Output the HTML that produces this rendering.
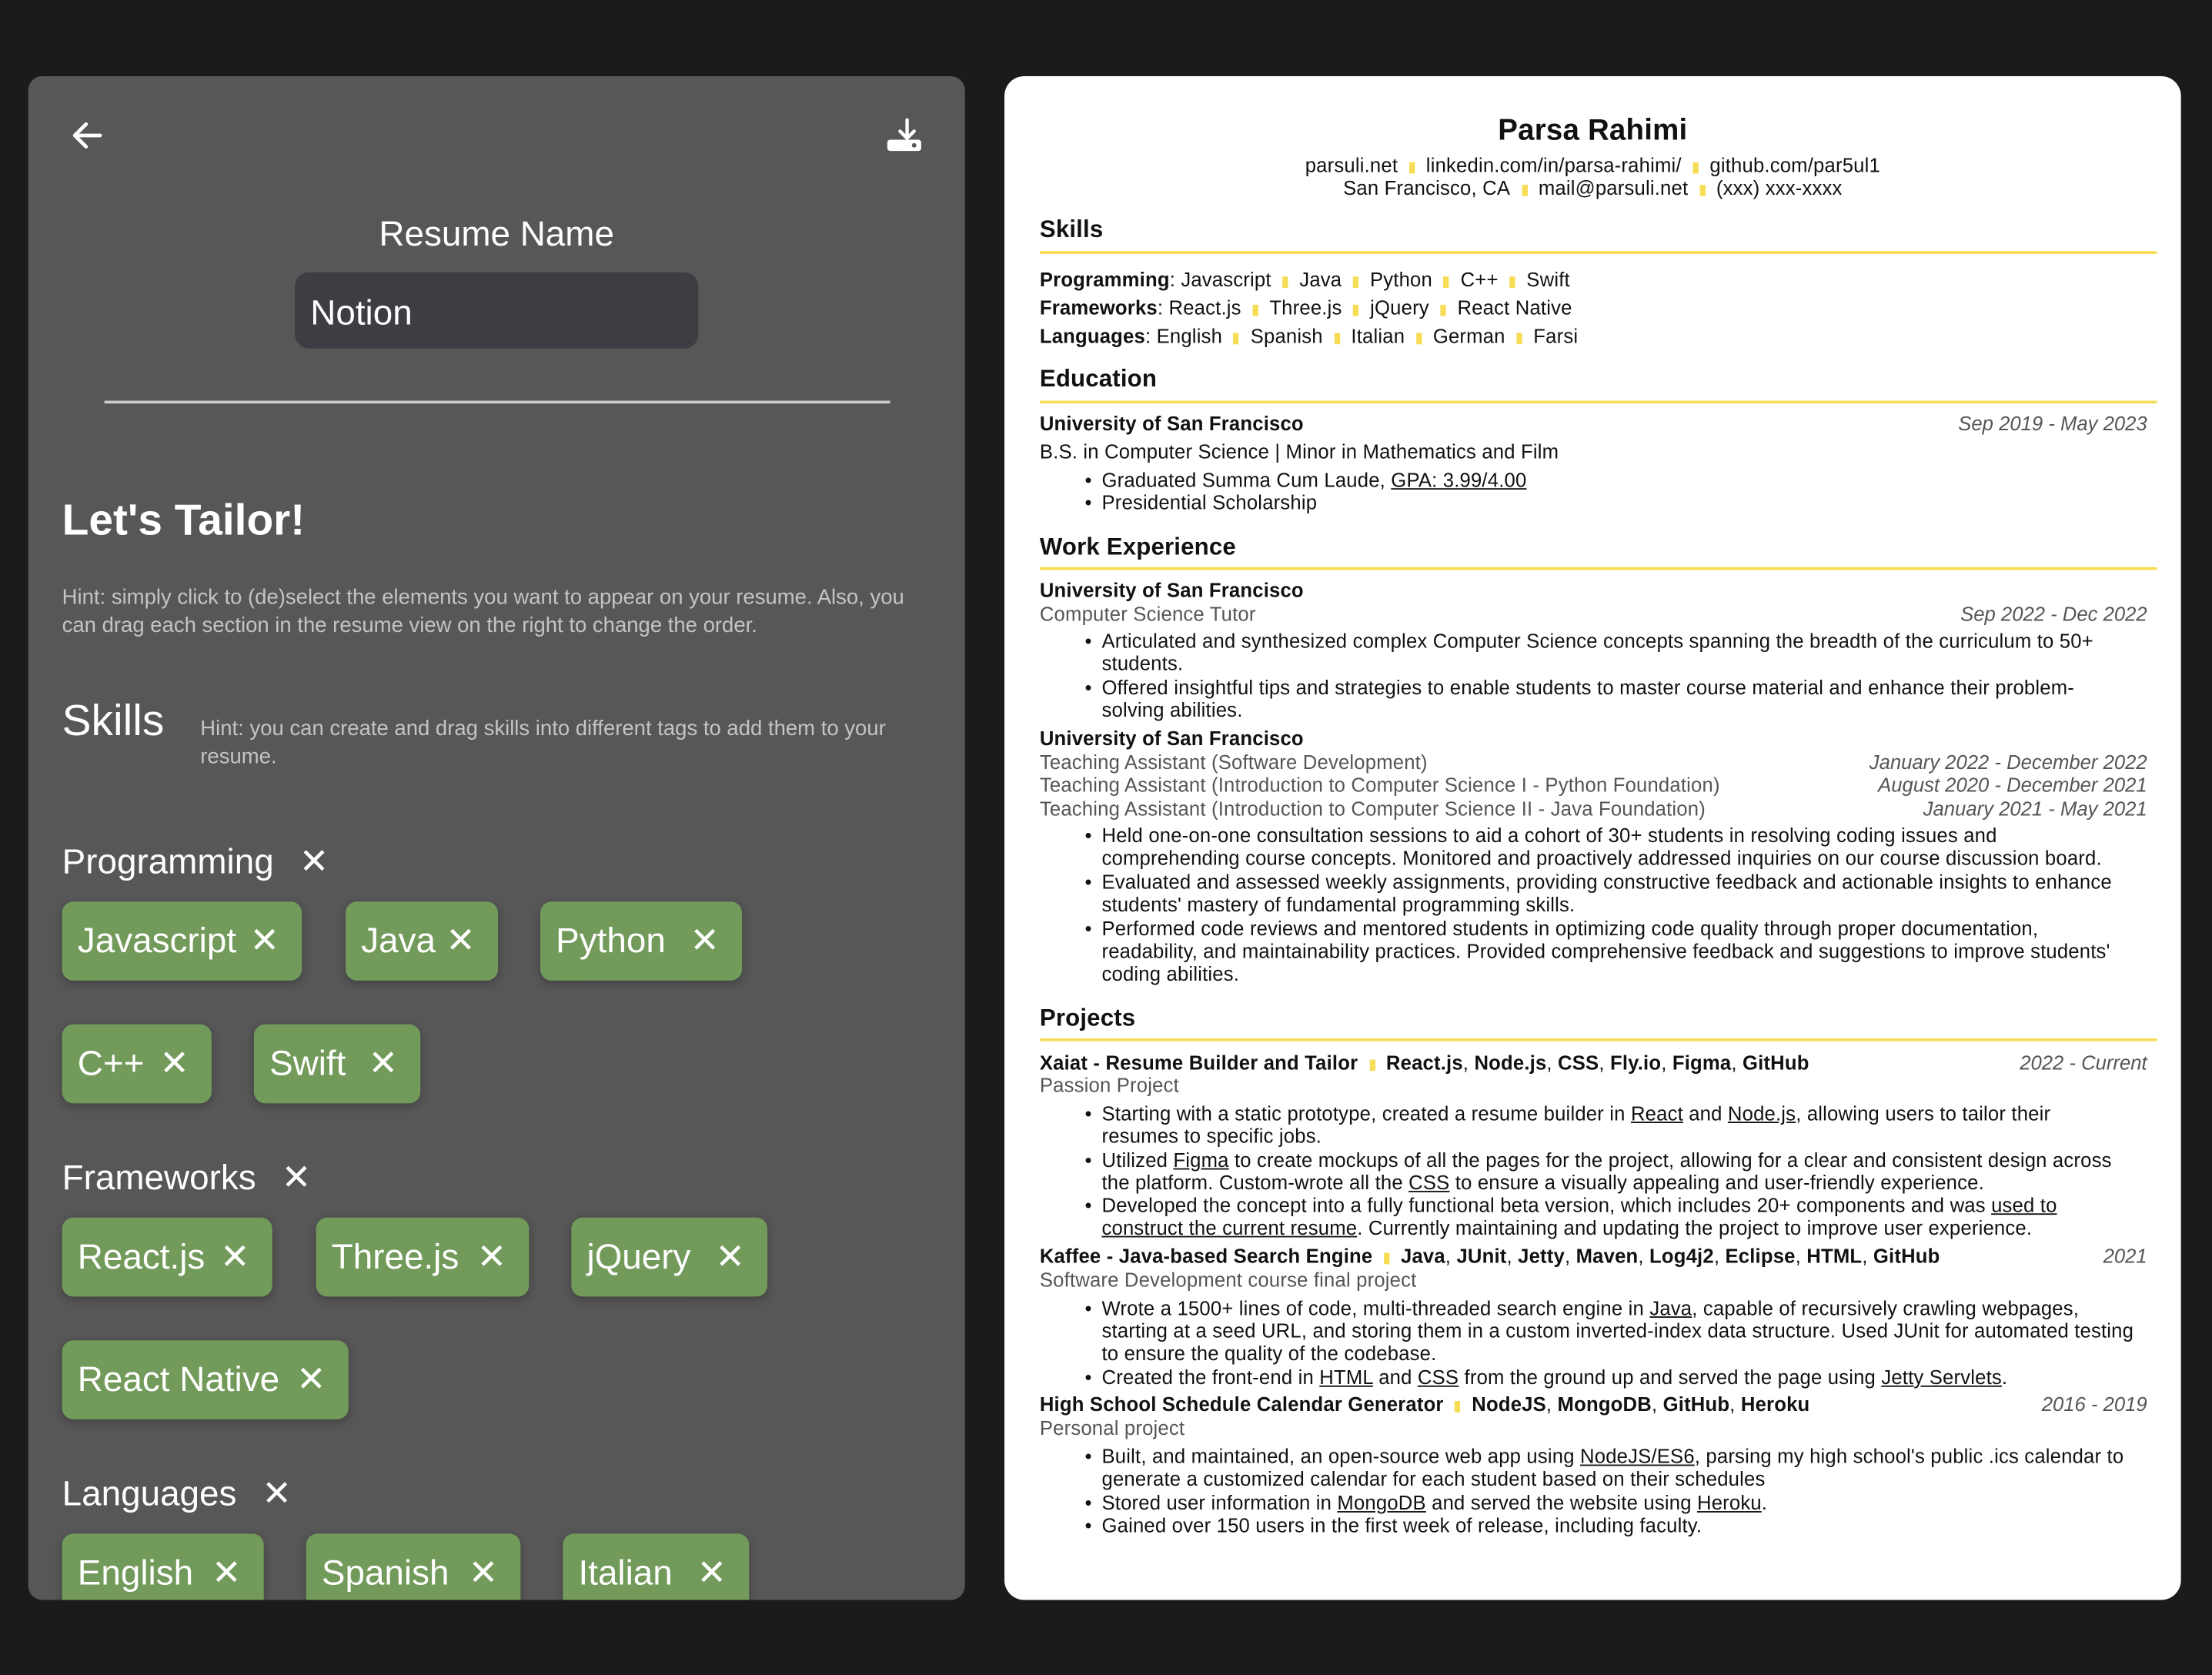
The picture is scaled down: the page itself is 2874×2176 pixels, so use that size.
<!DOCTYPE html>
<html><head><meta charset="utf-8">
<style>
html,body{margin:0;padding:0;background:#1b1b1b;width:2874px;height:2175px;overflow:hidden}
#w{position:absolute;left:0;top:0;width:1568px;height:1187px;transform:scale(1.8329);transform-origin:0 0;font-family:"Liberation Sans",sans-serif}
.lp{position:absolute;left:20px;top:54px;width:664px;height:1080px;background:#575757;border-radius:10px;overflow:hidden;color:#fff}
.rp{position:absolute;left:712px;top:54px;width:834px;height:1080px;background:#fff;border-radius:14px;overflow:hidden;color:#111}
.a{position:absolute;white-space:nowrap}
.tag{position:absolute;height:56px;background:#729a5a;border-radius:8px;font-size:25px;line-height:56px;padding-left:11px;box-sizing:border-box;box-shadow:0 2px 6px rgba(0,0,0,.25)}
.tag b{font-weight:normal;position:absolute;right:16px;top:0}
.cat{position:absolute;left:24px;font-size:25px}
.cat b{font-weight:normal;margin-left:18px}
.r .a{font-size:14px;line-height:16px;left:25px;letter-spacing:0.1px}
.r .h{font-size:17px;font-weight:bold;line-height:20px}
.rule{position:absolute;left:25px;width:792px;height:2px;background:#f7dd55}
.s{display:inline-block;width:4px;height:8px;background:#f7dd55;margin:0 8px;vertical-align:-1px}
.g{color:#555}
.dt{position:absolute;right:24px;font-style:italic;color:#555;font-size:14px;line-height:16px;white-space:nowrap}
.b{left:69px!important}
.b:before{content:"•";position:absolute;left:-12px}
u{text-decoration:underline}
</style></head><body><div id="w">
<div class="lp">
 <svg class="a" style="left:30px;top:32px" width="24" height="20" viewBox="0 0 24 20"><path d="M21 10H3M11 2L3 10l8 8" stroke="#fff" stroke-width="2.6" fill="none" stroke-linecap="round" stroke-linejoin="round"/></svg>
 <svg class="a" style="left:608px;top:29px" width="26" height="26" viewBox="0 0 26 26"><path d="M15 2v13M10 10l5 5 5-5" stroke="#fff" stroke-width="2.4" fill="none" stroke-linecap="round"/><rect x="1" y="16" width="24" height="8" rx="2" fill="#fff"/><circle cx="20" cy="20" r="1.6" fill="#575757"/></svg>
 <div class="a" style="left:0;width:664px;text-align:center;top:98px;font-size:25px">Resume Name</div>
 <div class="a" style="left:189px;top:139px;width:286px;height:54px;background:#3e3d43;border-radius:10px"></div>
 <div class="a" style="left:200px;top:154px;font-size:25px">Notion</div>
 <div class="a" style="left:54px;top:230px;width:557px;height:2px;background:#ccc"></div>
 <div class="a" style="left:24px;top:297px;font-size:31px;font-weight:bold">Let's Tailor!</div>
 <div class="a" style="left:24px;top:360px;font-size:15px;line-height:20px;color:#c4c4c4;white-space:normal;width:610px">Hint: simply click to (de)select the elements you want to appear on your resume. Also, you can drag each section in the resume view on the right to change the order.</div>
 <div class="a" style="left:24px;top:439px;font-size:31px">Skills</div>
 <div class="a" style="left:122px;top:453px;font-size:15px;line-height:20px;color:#c4c4c4;white-space:normal;width:510px">Hint: you can create and drag skills into different tags to add them to your resume.</div>
 <div class="cat" style="top:542px">Programming<b>✕</b></div>
 <div class="tag" style="left:24px;top:585px;width:170px">Javascript<b>✕</b></div>
 <div class="tag" style="left:225px;top:585px;width:108px">Java<b>✕</b></div>
 <div class="tag" style="left:363px;top:585px;width:143px">Python<b>✕</b></div>
 <div class="tag" style="left:24px;top:672px;width:106px">C++<b>✕</b></div>
 <div class="tag" style="left:160px;top:672px;width:118px">Swift<b>✕</b></div>
 <div class="cat" style="top:766px">Frameworks<b>✕</b></div>
 <div class="tag" style="left:24px;top:809px;width:149px">React.js<b>✕</b></div>
 <div class="tag" style="left:204px;top:809px;width:151px">Three.js<b>✕</b></div>
 <div class="tag" style="left:385px;top:809px;width:139px">jQuery<b>✕</b></div>
 <div class="tag" style="left:24px;top:896px;width:203px">React Native<b>✕</b></div>
 <div class="cat" style="top:990px">Languages<b>✕</b></div>
 <div class="tag" style="left:24px;top:1033px;width:143px">English<b>✕</b></div>
 <div class="tag" style="left:197px;top:1033px;width:152px">Spanish<b>✕</b></div>
 <div class="tag" style="left:379px;top:1033px;width:132px">Italian<b>✕</b></div>
</div>
<div class="rp r">
 <div class="a" style="left:0!important;width:834px;text-align:center;top:26px;font-size:21px;font-weight:bold;line-height:26px">Parsa Rahimi</div>
 <div class="a" style="left:0!important;width:834px;text-align:center;top:55px">parsuli.net<span class="s"></span>linkedin.com/in/parsa-rahimi/<span class="s"></span>github.com/par5ul1</div>
 <div class="a" style="left:0!important;width:834px;text-align:center;top:71px">San Francisco, CA<span class="s"></span>mail@parsuli.net<span class="s"></span>(xxx) xxx-xxxx</div>
 <div class="a h" style="top:99px">Skills</div><div class="rule" style="top:124px"></div>
 <div class="a" style="top:136px"><b>Programming</b>: Javascript<span class="s"></span>Java<span class="s"></span>Python<span class="s"></span>C++<span class="s"></span>Swift</div>
 <div class="a" style="top:156px"><b>Frameworks</b>: React.js<span class="s"></span>Three.js<span class="s"></span>jQuery<span class="s"></span>React Native</div>
 <div class="a" style="top:176px"><b>Languages</b>: English<span class="s"></span>Spanish<span class="s"></span>Italian<span class="s"></span>German<span class="s"></span>Farsi</div>
 <div class="a h" style="top:205px">Education</div><div class="rule" style="top:230px"></div>
 <div class="a" style="top:238px"><b>University of San Francisco</b></div><div class="dt" style="top:238px">Sep 2019 - May 2023</div>
 <div class="a" style="top:258px">B.S. in Computer Science | Minor in Mathematics and Film</div>
 <div class="a b" style="top:278px">Graduated Summa Cum Laude, <u>GPA: 3.99/4.00</u></div>
 <div class="a b" style="top:294px">Presidential Scholarship</div>
 <div class="a h" style="top:324px">Work Experience</div><div class="rule" style="top:348px"></div>
 <div class="a" style="top:356px"><b>University of San Francisco</b></div>
 <div class="a g" style="top:373px">Computer Science Tutor</div><div class="dt" style="top:373px">Sep 2022 - Dec 2022</div>
 <div class="a b" style="top:392px">Articulated and synthesized complex Computer Science concepts spanning the breadth of the curriculum to 50+<br>students.</div>
 <div class="a b" style="top:425px">Offered insightful tips and strategies to enable students to master course material and enhance their problem-<br>solving abilities.</div>
 <div class="a" style="top:461px"><b>University of San Francisco</b></div>
 <div class="a g" style="top:478px">Teaching Assistant (Software Development)</div><div class="dt" style="top:478px">January 2022 - December 2022</div>
 <div class="a g" style="top:494px">Teaching Assistant (Introduction to Computer Science I - Python Foundation)</div><div class="dt" style="top:494px">August 2020 - December 2021</div>
 <div class="a g" style="top:511px">Teaching Assistant (Introduction to Computer Science II - Java Foundation)</div><div class="dt" style="top:511px">January 2021 - May 2021</div>
 <div class="a b" style="top:530px">Held one-on-one consultation sessions to aid a cohort of 30+ students in resolving coding issues and<br>comprehending course concepts. Monitored and proactively addressed inquiries on our course discussion board.</div>
 <div class="a b" style="top:563px">Evaluated and assessed weekly assignments, providing constructive feedback and actionable insights to enhance<br>students' mastery of fundamental programming skills.</div>
 <div class="a b" style="top:596px">Performed code reviews and mentored students in optimizing code quality through proper documentation,<br>readability, and maintainability practices. Provided comprehensive feedback and suggestions to improve students'<br>coding abilities.</div>
 <div class="a h" style="top:658px">Projects</div><div class="rule" style="top:682px"></div>
 <div class="a" style="top:691px"><b>Xaiat - Resume Builder and Tailor</b><span class="s"></span><b>React.js</b>, <b>Node.js</b>, <b>CSS</b>, <b>Fly.io</b>, <b>Figma</b>, <b>GitHub</b></div><div class="dt" style="top:691px">2022 - Current</div>
 <div class="a g" style="top:707px">Passion Project</div>
 <div class="a b" style="top:727px">Starting with a static prototype, created a resume builder in <u>React</u> and <u>Node.js</u>, allowing users to tailor their<br>resumes to specific jobs.</div>
 <div class="a b" style="top:760px">Utilized <u>Figma</u> to create mockups of all the pages for the project, allowing for a clear and consistent design across<br>the platform. Custom-wrote all the <u>CSS</u> to ensure a visually appealing and user-friendly experience.</div>
 <div class="a b" style="top:792px">Developed the concept into a fully functional beta version, which includes 20+ components and was <u>used to</u><br><u>construct the current resume</u>. Currently maintaining and updating the project to improve user experience.</div>
 <div class="a" style="top:828px"><b>Kaffee - Java-based Search Engine</b><span class="s"></span><b>Java</b>, <b>JUnit</b>, <b>Jetty</b>, <b>Maven</b>, <b>Log4j2</b>, <b>Eclipse</b>, <b>HTML</b>, <b>GitHub</b></div><div class="dt" style="top:828px">2021</div>
 <div class="a g" style="top:845px">Software Development course final project</div>
 <div class="a b" style="top:865px">Wrote a 1500+ lines of code, multi-threaded search engine in <u>Java</u>, capable of recursively crawling webpages,<br>starting at a seed URL, and storing them in a custom inverted-index data structure. Used JUnit for automated testing<br>to ensure the quality of the codebase.</div>
 <div class="a b" style="top:914px">Created the front-end in <u>HTML</u> and <u>CSS</u> from the ground up and served the page using <u>Jetty Servlets</u>.</div>
 <div class="a" style="top:933px"><b>High School Schedule Calendar Generator</b><span class="s"></span><b>NodeJS</b>, <b>MongoDB</b>, <b>GitHub</b>, <b>Heroku</b></div><div class="dt" style="top:933px">2016 - 2019</div>
 <div class="a g" style="top:950px">Personal project</div>
 <div class="a b" style="top:970px">Built, and maintained, an open-source web app using <u>NodeJS/ES6</u>, parsing my high school's public .ics calendar to<br>generate a customized calendar for each student based on their schedules</div>
 <div class="a b" style="top:1003px">Stored user information in <u>MongoDB</u> and served the website using <u>Heroku</u>.</div>
 <div class="a b" style="top:1019px">Gained over 150 users in the first week of release, including faculty.</div>
</div>
</div></body></html>
